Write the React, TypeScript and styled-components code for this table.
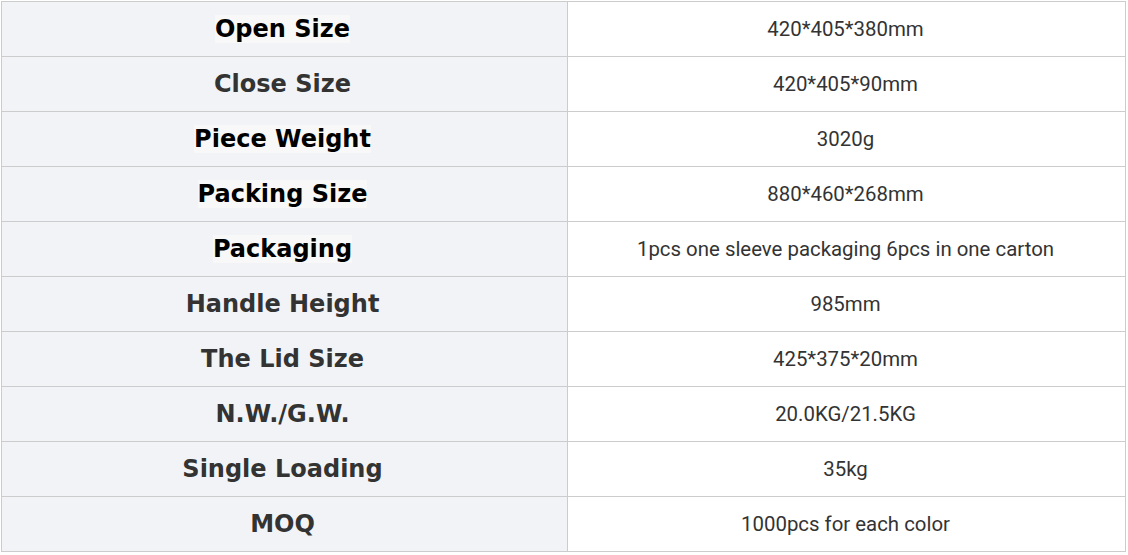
import React from "react";
import styled, { createGlobalStyle } from "styled-components";

const Global = createGlobalStyle`
  html, body { margin: 0; padding: 0; background: #ffffff; }
`;

const Wrap = styled.div`
  padding: 1px 0 0 1px;
`;

const Table = styled.table`
  width: 1125px;
  border-collapse: collapse;
  table-layout: fixed;
  border: 1px solid #cccccc;
`;

const LabelCell = styled.td`
  width: 566px;
  height: 55px;
  padding: 0 4px 0 0;
  box-sizing: border-box;
  background: #f2f3f7;
  border: 1px solid #cccccc;
  text-align: center;
  vertical-align: middle;
  font-family: "DejaVu Sans", Verdana, sans-serif;
  font-weight: bold;
  font-size: 24px;
  line-height: 28px;
`;

const Label = styled.span<{ $hl?: boolean }>`
  color: ${(p) => (p.$hl ? "#000000" : "#333333")};
  background: ${(p) => (p.$hl ? "#f8f8f8" : "transparent")};
`;

const ValueCell = styled.td`
  height: 55px;
  padding: 0 2px 0 0;
  box-sizing: border-box;
  background: #ffffff;
  border: 1px solid #cccccc;
  text-align: center;
  vertical-align: middle;
  font-family: Roboto, "Liberation Sans", sans-serif;
  font-size: 20.4px;
  line-height: 24px;
  color: #333333;
`;

const rows: { label: string; value: string; hl: boolean }[] = [
  { label: "Open Size", value: "420*405*380mm", hl: true },
  { label: "Close Size", value: "420*405*90mm", hl: false },
  { label: "Piece Weight", value: "3020g", hl: true },
  { label: "Packing Size", value: "880*460*268mm", hl: true },
  { label: "Packaging", value: "1pcs one sleeve packaging 6pcs in one carton", hl: true },
  { label: "Handle Height", value: "985mm", hl: false },
  { label: "The Lid Size", value: "425*375*20mm", hl: false },
  { label: "N.W./G.W.", value: "20.0KG/21.5KG", hl: false },
  { label: "Single Loading", value: "35kg", hl: false },
  { label: "MOQ", value: "1000pcs for each color", hl: false },
];

export default function App() {
  return (
    <>
      <Global />
      <Wrap>
        <Table>
          <tbody>
            {rows.map((r) => (
              <tr key={r.label}>
                <LabelCell>
                  <Label $hl={r.hl}>{r.label}</Label>
                </LabelCell>
                <ValueCell>{r.value}</ValueCell>
              </tr>
            ))}
          </tbody>
        </Table>
      </Wrap>
    </>
  );
}
